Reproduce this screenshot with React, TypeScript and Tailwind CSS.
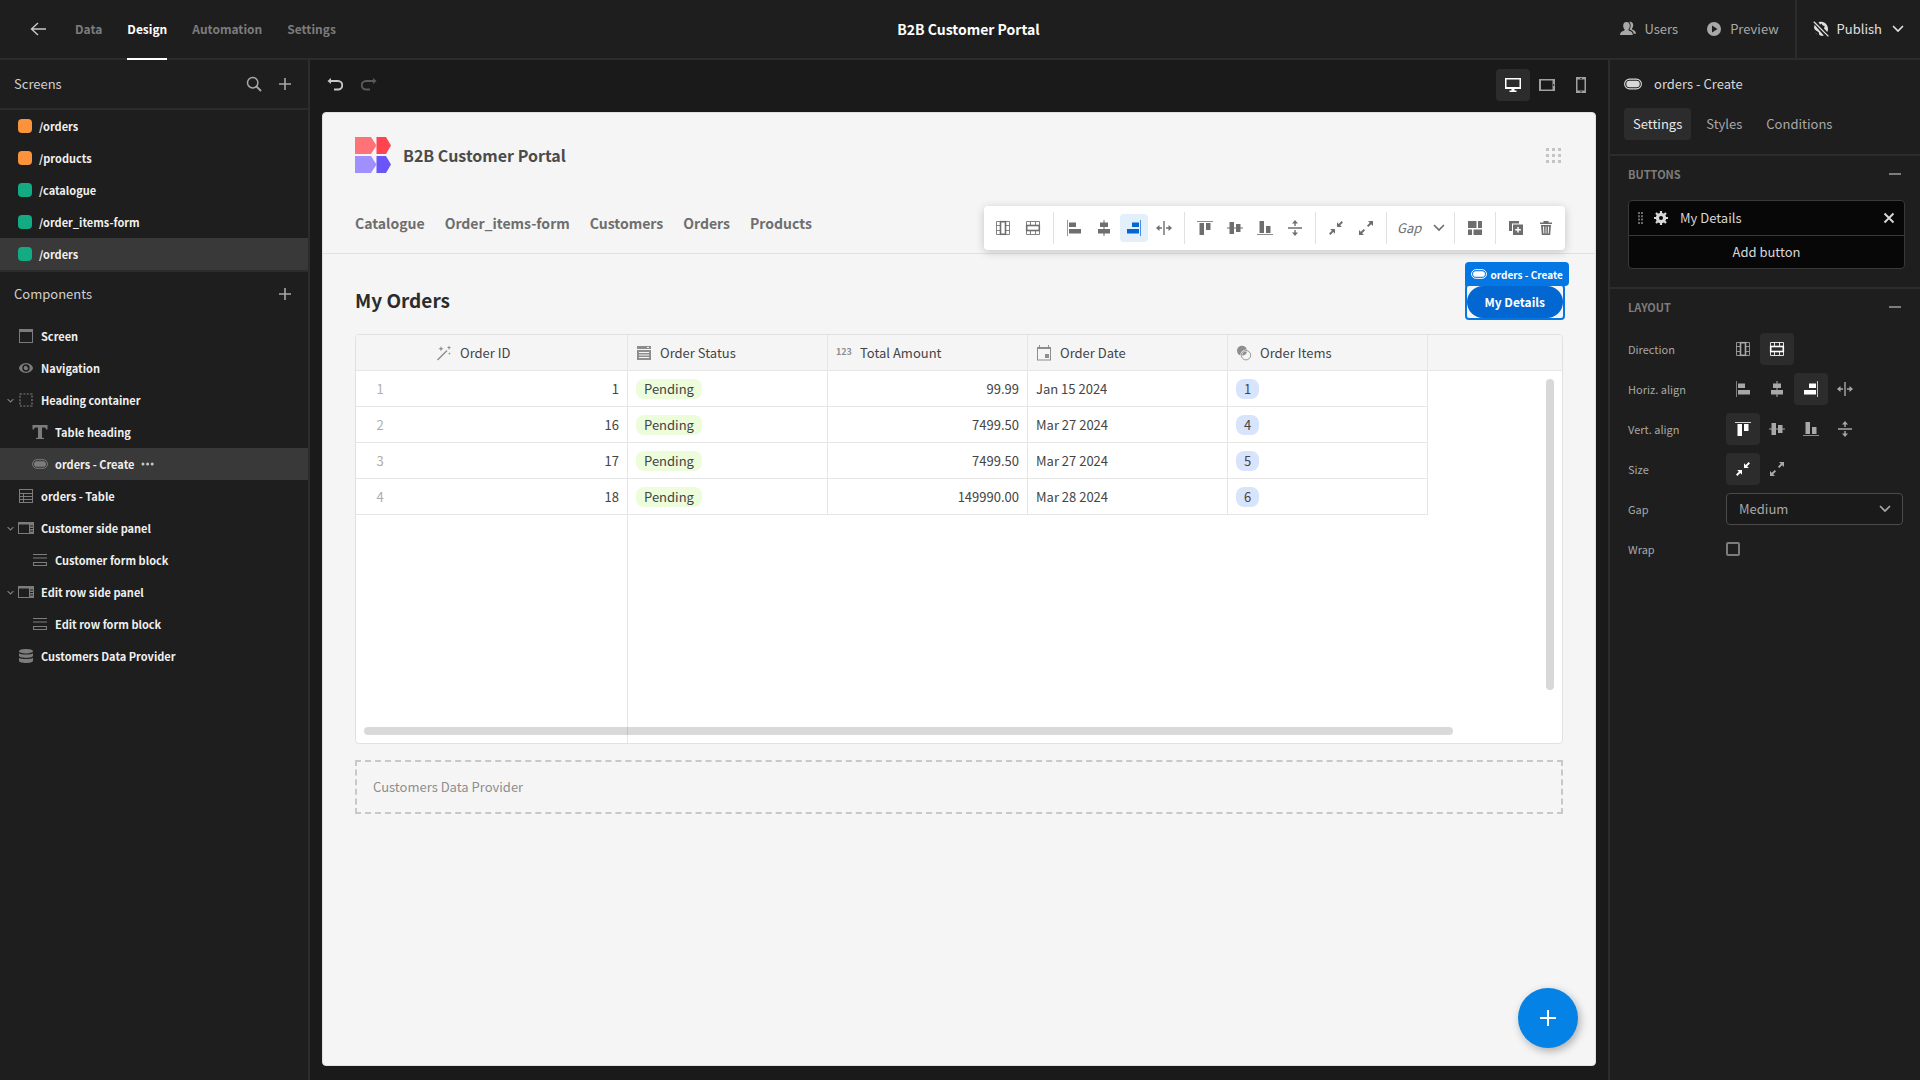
import type { ReactNode } from 'react';
import clsx from 'clsx';

interface IconProps {
  children: ReactNode;
  size?: string;
  box?: string;
}

function Icon({ children, size = 'size-4', box = '0 0 16 16' }: IconProps) {
  return (
    <svg viewBox={box} className={clsx('shrink-0', size)} fill="currentColor" aria-hidden="true">
      {children}
    </svg>
  );
}

const columnIcon = (
  <Icon>
    <g fill="none" stroke="currentColor">
      <path opacity=".85" d="M1.500 1.500h13v13h-13zM1.500 5.500h4M1.500 10.500h4M10.500 5.500h4M10.500 10.500h4" />
      <rect x="5.500" y="1.700" width="5" height="12.600" strokeWidth="1.600" />
    </g>
  </Icon>
);

const rowIcon = (
  <Icon>
    <g fill="none" stroke="currentColor">
      <path opacity=".85" d="M1.500 1.500h13v13h-13zM5.500 1.500v4M10.500 1.500v4M5.500 10.500v4M10.500 10.500v4" />
      <rect x="1.700" y="5.500" width="12.600" height="5" strokeWidth="1.600" />
    </g>
  </Icon>
);

const alignLeft = <Icon><path opacity=".7" d="M1 0h1v16H1z" /><path d="M3 2.500h7v4.500H3zM3 9h12v4.500H3z" /></Icon>;
const alignCenter = <Icon><path d="M7.500 0h1v16h-1zM4 2.500h8v4.500H4zM2 9h12v4.500H2z" /></Icon>;
const alignRight = <Icon><path opacity=".7" d="M14 0h1v16h-1z" /><path d="M6 2.500h7v4.500H6zM1 9h12v4.500H1z" /></Icon>;
const spreadH = (
  <Icon>
    <path d="M7.300 1h1.400v14H7.300zM0 8l3.500-3v2.300H6v1.400H3.500V11zM16 8l-3.500-3v2.300H10v1.400h2.500V11z" />
  </Icon>
);
const alignTop = <Icon><path opacity=".8" d="M0 1h16v1H0z" /><path d="M2.500 3h4.500v12H2.500zM9 3h4.500v7H9z" /></Icon>;
const alignMiddle = <Icon><path d="M0 7.500h16v1H0zM2.500 2h4.500v12H2.500zM9 4h4.500v8H9z" /></Icon>;
const alignBottom = <Icon><path opacity=".8" d="M0 14h16v1H0z" /><path d="M2.500 1h4.500v12H2.500zM9 6h4.500v7H9z" /></Icon>;
const spreadV = (
  <Icon>
    <path d="M1 7.300h14v1.400H1zM8 0l3 3.500H8.700V6H7.300V3.500H5zM8 16l3-3.500H8.700V10H7.300v2.500H5z" />
  </Icon>
);
const shrinkIcon = (
  <Icon>
    <path d="M9 7V2.200l1.700 1.700L13.600 1 15 2.400l-2.900 2.900L13.800 7zM7 9v4.800l-1.700-1.700L2.400 15 1 13.600l2.900-2.900L2.200 9z" />
  </Icon>
);
const growIcon = (
  <Icon>
    <path d="M15 1v5l-1.800-1.800-2.900 2.900-1.400-1.400 2.900-2.900L10 1zM1 15v-5l1.800 1.800 2.900-2.900 1.400 1.400-2.900 2.900L6 15z" />
  </Icon>
);

const chevronDown = (
  <Icon size="size-3" box="0 0 12 12">
    <path d="M1.500 3.500 6 8l4.500-4.500" fill="none" stroke="currentColor" strokeWidth="1.700" strokeLinecap="round" />
  </Icon>
);
const plusIcon = (
  <Icon>
    <path d="M7.200 2h1.600v5.200H14v1.600H8.800V14H7.200V8.800H2V7.200h5.200z" />
  </Icon>
);
const minusIcon = <Icon size="size-3" box="0 0 12 12"><path d="M0 5h12v2H0z" /></Icon>;

function PillIcon({ size = 'h-3 w-4' }: { size?: string }) {
  return (
    <svg viewBox="0 0 18 12" className={clsx('shrink-0', size)} aria-hidden="true">
      <rect x=".600" y="1.100" width="16.800" height="9.800" rx="4.900" fill="none" stroke="currentColor" strokeWidth="1.100" />
      <rect x="2.300" y="2.800" width="13.400" height="6.400" rx="3.200" fill="currentColor" />
    </svg>
  );
}

const screenIcon = <Icon><path fillRule="evenodd" d="M1 1h14v14H1zm1 3v10h12V4z" /></Icon>;
const eyeIcon = (
  <Icon>
    <path
      fillRule="evenodd"
      d="M8 3C4.500 3 1 6 1 8s3.500 5 7 5 7-3 7-5-3.500-5-7-5zm0 1.300a3.700 3.700 0 1 1 0 7.400 3.700 3.700 0 0 1 0-7.400z"
    />
    <path d="M8 5.800c.6 0 .9.100 1.200.3-.9.300-.6 1.700.9 1.500A2.200 2.200 0 1 1 8 5.800z" />
  </Icon>
);
const containerIcon = (
  <Icon>
    <rect x="2" y="2" width="12" height="12" fill="none" stroke="currentColor" strokeWidth="1.200" strokeDasharray="2 1.400" />
  </Icon>
);
const textIcon = <Icon><path d="M.5 1h15v4.500h-1.300c-.3-1.600-1-2-2.700-2H10v9c0 1.200.5 1.500 2 1.500v1H4v-1c1.500 0 2-.3 2-1.500v-9H4.500c-1.700 0-2.400.4-2.700 2H.5z" /></Icon>;
const tableIcon = (
  <Icon>
    <path fillRule="evenodd" d="M1 1h14v14H1zm1 1v3h12V2zm0 4v2h3V6zm4 0v2h8V6zM2 9v2h3V9zm4 0v2h8V9zm-4 3v2h3v-2zm4 0v2h8v-2z" />
  </Icon>
);
const sidePanelIcon = (
  <Icon>
    <path fillRule="evenodd" d="M0 2h16v12H0zm1 2.500V13h10V4.500zm11 1v1h3v-1zm0 2.500v1h3V8zm0 2.500v1h3v-1z" />
  </Icon>
);
const formIcon = <Icon><path fillRule="evenodd" d="M1 2h14v1H1zM1 5.500h14v1H1zM1 10h14v4H1zm1 1v2h12v-2z" /></Icon>;
const dataIcon = (
  <Icon>
    <path d="M8 1c3.900 0 7 .9 7 2.200S11.900 5.400 8 5.400 1 4.500 1 3.200 4.100 1 8 1zM1 5.200C2.500 6.200 5 6.500 8 6.500s5.500-.3 7-1.300v2.600C15 9 11.900 9.900 8 9.900S1 9 1 7.800zM1 9.700c1.500 1 4 1.300 7 1.300s5.500-.3 7-1.300v3C15 14 11.900 15 8 15s-7-1-7-2.300z" />
  </Icon>
);

const screens = [
  { name: '/orders', tint: 'bg-[#fb923c]' },
  { name: '/products', tint: 'bg-[#fb923c]' },
  { name: '/catalogue', tint: 'bg-[#12ab84]' },
  { name: '/order_items-form', tint: 'bg-[#12ab84]' },
  { name: '/orders', tint: 'bg-[#12ab84]', selected: true },
];

const components = [
  { name: 'Screen', icon: screenIcon },
  { name: 'Navigation', icon: eyeIcon },
  { name: 'Heading container', icon: containerIcon, open: true },
  { name: 'Table heading', icon: textIcon, nested: true },
  { name: 'orders - Create', icon: <PillIcon />, nested: true, selected: true },
  { name: 'orders - Table', icon: tableIcon },
  { name: 'Customer side panel', icon: sidePanelIcon, open: true },
  { name: 'Customer form block', icon: formIcon, nested: true },
  { name: 'Edit row side panel', icon: sidePanelIcon, open: true },
  { name: 'Edit row form block', icon: formIcon, nested: true },
  { name: 'Customers Data Provider', icon: dataIcon },
];

const orders = [
  { id: 1, status: 'Pending', total: '99.99', date: 'Jan 15 2024', items: 1 },
  { id: 16, status: 'Pending', total: '7499.50', date: 'Mar 27 2024', items: 4 },
  { id: 17, status: 'Pending', total: '7499.50', date: 'Mar 27 2024', items: 5 },
  { id: 18, status: 'Pending', total: '149990.00', date: 'Mar 28 2024', items: 6 },
];

function TopBar() {
  return (
    <header className="grid h-[60px] grid-cols-[1fr_auto_1fr] border-b-2 border-[#2c2c2c] pl-[17px]">
      <div className="flex items-center pl-[11px]">
        <button aria-label="Back" className="mr-[27px] text-[#c8c8c8]">
          <Icon size="size-5" box="0 0 20 20">
            <path d="M10 4 3.500 10 10 16M3.500 10H18" fill="none" stroke="currentColor" strokeWidth="1.400" />
          </Icon>
        </button>
        <nav className="flex gap-[25px] self-stretch text-xs font-bold text-[#7c7c7c]">
          {['Data', 'Design', 'Automation', 'Settings'].map((tab) => (
            <a
              key={tab}
              href="#"
              className={clsx('-mb-0.5 flex items-center border-b-2', tab === 'Design' ? 'border-white text-white' : 'border-transparent')}
            >
              {tab}
            </a>
          ))}
        </nav>
      </div>
      <h1 className="self-center text-sm font-bold text-white">B2B Customer Portal</h1>
      <div className="flex items-center justify-end text-[13px] text-[#a8a8a8]">
        <button className="mr-7 flex items-center gap-2">
          <Icon>
            <path d="M6.500 1C8.700 1 9.800 2.600 9.800 4.700c0 1.500-.5 2.700-1.200 3.500-.3.400-.3 1.100.2 1.300 2.400 1 4 1.700 4 4.300V14H0v-.2c0-2.600 1.800-3.300 4.200-4.300.5-.2.500-.9.200-1.300-.7-.8-1.200-2-1.200-3.500C3.200 2.600 4.300 1 6.500 1z" />
            <path d="M9.300.8c2.400-.5 3.900 1 3.900 3.400 0 1.400-.5 2.400-1.100 3.100-.3.400-.2 1 .2 1.200 2.200.9 3.700 1.800 3.700 4.200h-2.300c-.3-2.400-2-3.300-4.200-4.200 1.500-2.200 1.700-5.500-.2-7.700z" />
          </Icon>
          Users
        </button>
        <button className="mr-4 flex items-center gap-2">
          <Icon>
            <path fillRule="evenodd" d="M8 1a7 7 0 1 0 0 14A7 7 0 0 0 8 1zM6 4.500 11.500 8 6 11.500z" />
          </Icon>
          Preview
        </button>
        <button className="flex items-center gap-2 self-stretch border-l-2 border-[#2c2c2c] px-4 text-[#e0e0e0]">
          <Icon>
            <path d="M5.500 1A7.300 7.300 0 0 1 15 8c0 1.200-.2 2-.7 2.900l-3.300-3.300.7-2.500-2-.5L8.500 2.500 7 3.800zM1.500 3.800l9.300 10.700-1.800.5-2.700-1-.6-2.700L2 8.700 1 7zM2 11l2.500 2.800A7 7 0 0 1 2 11z" />
            <path d="m.8.800 14.600 14.600" fill="none" stroke="currentColor" strokeWidth="1.300" />
          </Icon>
          <span className="mr-0.5">Publish</span>
          {chevronDown}
        </button>
      </div>
    </header>
  );
}

function LeftPanel() {
  return (
    <aside className="w-[310px] shrink-0 border-r-2 border-[#2c2c2c] text-[11px] font-bold text-[#f0f0f0]">
      <div className="flex h-[50px] items-center border-b-2 border-[#2c2c2c] px-[14px] text-[#a8a8a8]">
        <h2 className="grow text-[13px] font-normal text-[#d0d0d0]">Screens</h2>
        <button aria-label="Search" className="mr-[15px]">
          <Icon>
            <circle cx="6.700" cy="6.700" r="5.200" fill="none" stroke="currentColor" strokeWidth="1.500" />
            <path d="m10.500 10.500 4.500 4.500" stroke="currentColor" strokeWidth="1.800" />
          </Icon>
        </button>
        <button aria-label="Add screen" className="mr-px">{plusIcon}</button>
      </div>
      <ul className="border-b-2 border-[#2c2c2c]">
        {screens.map((screen, i) => (
          <li key={i}>
            <a href="#" className={clsx('flex h-8 items-center gap-[7px] px-[18px]', screen.selected && 'bg-[#393939]')}>
              <span className={clsx('size-[14px] rounded', screen.tint)} />
              {screen.name}
            </a>
          </li>
        ))}
      </ul>
      <div className="flex h-11 items-center px-[14px] text-[#a8a8a8]">
        <h2 className="grow text-[13px] font-normal text-[#d0d0d0]">Components</h2>
        <button aria-label="Add component" className="mr-px">{plusIcon}</button>
      </div>
      <ul className="pt-1">
        {components.map((item) => (
          <li key={item.name} className={clsx('flex h-8 items-center', item.nested ? 'pl-8' : 'pl-[7px]', item.selected && 'bg-[#393939]')}>
            {!item.nested && (
              <span className="w-[11px] text-[#7c7c7c]">
                {item.open && (
                  <Icon size="size-[7px]" box="0 0 12 12">
                    <path d="M1 3.500 6 8.500l5-5" fill="none" stroke="currentColor" strokeWidth="2" />
                  </Icon>
                )}
              </span>
            )}
            <span className="mr-[7px] text-[#7c7c7c]">{item.icon}</span>
            <a href="#">{item.name}</a>
            {item.selected && (
              <button aria-label="More" className="ml-1.5 text-[#c8c8c8]">
                <Icon>
                  <circle cx="3" cy="8" r="1.500" />
                  <circle cx="7.600" cy="8" r="1.500" />
                  <circle cx="12.200" cy="8" r="1.500" />
                </Icon>
              </button>
            )}
          </li>
        ))}
      </ul>
    </aside>
  );
}

function ToolButton({ label, active, children }: { label: string; active?: boolean; children: ReactNode }) {
  return (
    <button
      aria-label={label}
      className={clsx('flex size-7 items-center justify-center rounded-sm', active && 'bg-[#e3effb] text-[#0367d1]')}
    >
      {children}
    </button>
  );
}

function ToolDivider() {
  return <span className="mx-1 h-8 w-px bg-[#e1e1e1]" />;
}

function FloatingToolbar() {
  return (
    <div className="absolute top-[93px] right-[30px] z-10 flex items-center gap-0.5 rounded bg-white px-[5px] py-1.5 text-[#6e6e6e] shadow-[0_2px_10px_rgba(0,0,0,0.2)]">
      <ToolButton label="Column">{columnIcon}</ToolButton>
      <ToolButton label="Row">{rowIcon}</ToolButton>
      <ToolDivider />
      <ToolButton label="Align left">{alignLeft}</ToolButton>
      <ToolButton label="Align center">{alignCenter}</ToolButton>
      <ToolButton label="Align right" active>{alignRight}</ToolButton>
      <ToolButton label="Space horizontally">{spreadH}</ToolButton>
      <ToolDivider />
      <ToolButton label="Align top">{alignTop}</ToolButton>
      <ToolButton label="Align middle">{alignMiddle}</ToolButton>
      <ToolButton label="Align bottom">{alignBottom}</ToolButton>
      <ToolButton label="Space vertically">{spreadV}</ToolButton>
      <ToolDivider />
      <ToolButton label="Shrink">{shrinkIcon}</ToolButton>
      <ToolButton label="Grow">{growIcon}</ToolButton>
      <ToolDivider />
      <button className="flex w-[55px] items-center justify-between pr-[3px] pl-1 text-[13px] italic">
        Gap
        {chevronDown}
      </button>
      <ToolDivider />
      <ToolButton label="Blocks">
        <Icon><path d="M1 1h8.500v7H1zM11 1h4v7h-4zM1 9.500h4V15H1zM6.500 9.500H15V15H6.500z" /></Icon>
      </ToolButton>
      <ToolDivider />
      <ToolButton label="Duplicate">
        <Icon>
          <path d="M1 1h10v2.500H4V11H1z" />
          <path fillRule="evenodd" d="M5 4.500h10V15H5zm4.300 2.500v2H7.200v1.500h2.100v2.100h1.500v-2.100h2.100V9h-2.100V7z" />
        </Icon>
      </ToolButton>
      <ToolButton label="Delete">
        <Icon>
          <path fillRule="evenodd" d="M5.500 1h5v1.500H14V4H2V2.500h3.500zM3 5h10l-.8 10H3.800zm2 1.500.4 7h.9l-.3-7zm2.600 0v7h.8v-7zm2.500 0-.3 7h.9l.4-7z" />
        </Icon>
      </ToolButton>
    </div>
  );
}

const headings = [
  {
    name: 'Order Status',
    icon: <Icon><path fillRule="evenodd" d="M1 1h14v3H1zm10 1v1h2V2zM1 5h14v10H1zm2 2v1h10V7zm0 2.500v1h10v-1zM3 12v1h10v-1z" /></Icon>,
  },
  { name: 'Total Amount', icon: <span className="block w-4 pb-0.5 text-[9px] leading-3 font-bold">123</span> },
  {
    name: 'Order Date',
    icon: (
      <Icon>
        <path fillRule="evenodd" d="M1 2h2V0h1v2h8V0h1v2h2v13.500H1zm1 2v10.500h12V4z" />
        <path d="M9 9h4v4H9z" />
      </Icon>
    ),
  },
  {
    name: 'Order Items',
    icon: (
      <Icon>
        <circle cx="6" cy="5.800" r="5" />
        <circle cx="10" cy="10.200" r="4.700" fill="none" stroke="#f5f5f5" strokeWidth="2" />
        <circle cx="10" cy="10.200" r="4.700" fill="none" stroke="currentColor" strokeWidth=".900" />
      </Icon>
    ),
  },
];

function OrdersTable() {
  const th = 'border-r border-b border-[#e6e6e6] px-2 font-normal';
  const td = 'border-r border-b border-[#e6e6e6] px-2';
  return (
    <div className="relative mt-4 flex h-[410px] flex-col overflow-hidden rounded border border-[#e1e1e1] bg-white">
      <table className="w-full table-fixed border-separate border-spacing-0 text-[13px] text-[#444444]">
        <colgroup>
          <col className="w-12" />
          <col className="w-56" />
          <col className="w-[200px]" />
          <col className="w-[200px]" />
          <col className="w-[200px]" />
          <col className="w-[200px]" />
          <col />
        </colgroup>
        <thead>
          <tr className="h-9 bg-[#f5f5f5] text-left">
            <th className="border-b border-[#e6e6e6]" aria-label="Row" />
            <th className={clsx(th, 'pl-8')}>
              <span className="flex items-center gap-2">
                <span className="text-[#8e8e8e]">
                  <Icon>
                    <path d="m1 14.500 9.500-9.500 1 1L2 15.500zM5 1l.7 2 2 .8-2 .7L5 6.500l-.7-2-2-.7 2-.8zM13 .5l.6 1.600 1.600.6-1.600.6-.6 1.600-.6-1.600-1.600-.6 1.600-.6zM13.500 7l.4 1.200 1.200.4-1.200.4-.4 1.200-.4-1.200-1.200-.4 1.200-.4z" />
                  </Icon>
                </span>
                Order ID
              </span>
            </th>
            {headings.map((heading) => (
              <th key={heading.name} className={th}>
                <span className="flex items-center gap-2">
                  <span className="text-[#8e8e8e]">{heading.icon}</span>
                  {heading.name}
                </span>
              </th>
            ))}
            <th className="border-b border-[#e6e6e6]" aria-label="Spacer" />
          </tr>
        </thead>
        <tbody>
          {orders.map((order, i) => (
            <tr key={order.id} className="h-9">
              <td className="border-b border-[#e6e6e6] text-center text-[#adadad]">{i + 1}</td>
              <td className={clsx(td, 'text-right')}>{order.id}</td>
              <td className={td}>
                <span className="inline-block h-5 rounded-lg bg-[#edfcdb] px-2 leading-5">{order.status}</span>
              </td>
              <td className={clsx(td, 'text-right')}>{order.total}</td>
              <td className={td}>{order.date}</td>
              <td className={td}>
                <span className="inline-block h-5 rounded-lg bg-[#d8e4fc] px-2 leading-5">{order.items}</span>
              </td>
              <td />
            </tr>
          ))}
        </tbody>
      </table>
      <div className="w-[272px] grow border-r border-[#e6e6e6]" />
      <span className="absolute top-11 right-2 bottom-[53px] w-2 rounded bg-[#d8d8d8]" />
      <span className="absolute right-[109px] bottom-2 left-2 h-2 rounded bg-black/15" />
    </div>
  );
}

function Canvas() {
  return (
    <div className="relative flex grow flex-col rounded border border-[#e1e1e1] bg-[#f5f5f5] text-[#6e6e6e]">
      <div className="border-b border-[#e1e1e1] px-8 pt-6 pb-3">
        <div className="flex items-center gap-3">
          <svg viewBox="0 0 36 36" className="size-9" aria-hidden="true">
            <path fill="#ff7277" d="M0 0h16l5.500 8.500L16 17H0z" />
            <path fill="#ff4450" d="M21.500 0H31l5 8.500-5 8.500h-9.500z" />
            <path fill="#9f8fff" d="M0 19h16l5.500 8.500L16 36H0z" />
            <path fill="#6a55f8" d="M21.500 19H31l5 8.500-5 8.500h-9.500z" />
          </svg>
          <h2 className="grow text-base font-bold text-[#4b4b4b]">B2B Customer Portal</h2>
          <button aria-label="Apps" className="mr-0.5 text-[#c4c4c4]">
            <Icon size="size-[15px]" box="0 0 15 15">
              <path d="M0 0h3v3H0zM6 0h3v3H6zM12 0h3v3h-3zM0 6h3v3H0zM6 6h3v3H6zM12 6h3v3h-3zM0 12h3v3H0zM6 12h3v3H6zM12 12h3v3h-3z" />
            </Icon>
          </button>
        </div>
        <nav className="mt-8 flex h-9 items-center gap-5 text-sm font-bold">
          {['Catalogue', 'Order_items-form', 'Customers', 'Orders', 'Products'].map((link) => (
            <a key={link} href="#">{link}</a>
          ))}
        </nav>
      </div>
      <FloatingToolbar />
      <main className="p-8">
        <div className="flex h-8 items-start justify-between">
          <h3 className="text-[19px] leading-7 font-bold text-[#2c2c2c]">My Orders</h3>
          <div className="relative">
            <button className="block h-8 rounded-full bg-[#0367d1] px-[18px] text-xs font-bold text-white">My Details</button>
            <span className="pointer-events-none absolute -inset-0.5 rounded border-2 border-[#0477e4]" />
            <span className="absolute bottom-full -left-0.5 flex h-6 items-center gap-1 rounded rounded-bl-none bg-[#0477e4] px-1.5 text-[10px] font-bold whitespace-nowrap text-white">
              <PillIcon />
              orders - Create
            </span>
          </div>
        </div>
        <OrdersTable />
        <div className="mt-4 flex h-[54px] items-center border-2 border-dashed border-[#c8c8c8] px-4 text-[13px] text-[#8e8e8e]">
          Customers Data Provider
        </div>
      </main>
      <button
        aria-label="Add"
        className="absolute right-[17px] bottom-[17px] flex size-[60px] items-center justify-center rounded-full bg-[#0482e6] text-white shadow-[2px_3px_8px_rgba(0,0,0,0.3)]"
      >
        <Icon><path d="M7 0h2v7h7v2H9v7H7V9H0V7h7z" /></Icon>
      </button>
    </div>
  );
}

function Workspace() {
  const device = 'flex h-8 w-[34px] items-center justify-center rounded';
  return (
    <section className="flex min-w-0 grow flex-col bg-[#1a1a1a] px-3 pb-[14px]">
      <div className="mb-0.5 flex h-[50px] items-center text-[#c8c8c8]">
        <button aria-label="Undo" className="mr-[18px] ml-[5px]">
          <Icon>
            <path d="M4 1v6L.500 4z" />
            <path d="M3 4h8a4 4 0 0 1 0 8.500H7" fill="none" stroke="currentColor" strokeWidth="1.900" />
          </Icon>
        </button>
        <button aria-label="Redo" className="text-[#5a5a5a]">
          <Icon>
            <path d="M12 1v6l3.500-3z" />
            <path d="M13 4H5a4 4 0 0 0 0 8.500h4" fill="none" stroke="currentColor" strokeWidth="1.900" />
          </Icon>
        </button>
        <button aria-label="Desktop" className={clsx(device, 'ml-auto bg-[#2c2c2c] text-white')}>
          <Icon><path fillRule="evenodd" d="M0 1h16v11H9.500v1.500h2V15h-7v-1.500h2V12H0zm1.500 1.500V10h13V2.500z" /></Icon>
        </button>
        <button aria-label="Tablet" className={clsx(device, 'text-[#a0a0a0]')}>
          <Icon><path fillRule="evenodd" d="M0 2h16v12H0zm2 1.500v9h11.500v-9zm12 3.700v1.600h1.200V7.200z" /></Icon>
        </button>
        <button aria-label="Mobile" className={clsx(device, '-mr-0.5 text-[#a0a0a0]')}>
          <Icon><path fillRule="evenodd" d="M3 0h10v16H3zm1.500 2.500v11h7v-11zM7 1v.700h2V1zm.3 13.300v1h1.400v-1z" /></Icon>
        </button>
      </div>
      <Canvas />
    </section>
  );
}

function OptionButton({ label, active, children }: { label: string; active?: boolean; children: ReactNode }) {
  return (
    <button
      aria-label={label}
      className={clsx('flex h-8 w-[34px] items-center justify-center rounded', active && 'bg-[#2c2c2c] text-white')}
    >
      {children}
    </button>
  );
}

function SettingRow({ label, htmlFor, children }: { label: string; htmlFor?: string; children: ReactNode }) {
  return (
    <div className="flex h-8 items-center">
      <label htmlFor={htmlFor} className="w-[98px] shrink-0 text-[11px]">{label}</label>
      {children}
    </div>
  );
}

function RightPanel() {
  return (
    <aside className="w-[312px] shrink-0 border-l-2 border-[#2c2c2c] text-[#a8a8a8]">
      <div className="border-b-2 border-[#2c2c2c] px-[14px] pt-2 pb-[14px] text-[13px]">
        <div className="flex h-8 items-center gap-3 text-[#d8d8d8]">
          <PillIcon size="h-3 w-[18px]" />
          orders - Create
        </div>
        <div className="mt-2 flex gap-1.5">
          {['Settings', 'Styles', 'Conditions'].map((tab) => (
            <button
              key={tab}
              className={clsx('h-8 rounded px-[9px]', tab === 'Settings' && 'bg-[#2c2c2c] text-[#e8e8e8]')}
            >
              {tab}
            </button>
          ))}
        </div>
      </div>

      <div className="border-b-2 border-[#2c2c2c] pt-1.5 pr-[15px] pb-[18px] pl-[18px]">
        <button className="flex h-6 w-full items-center justify-between pr-1 text-[11px] font-bold text-[#7c7c7c]">
          BUTTONS
          {minusIcon}
        </button>
        <div className="mt-[14px] rounded border border-[#393939] bg-[#070707] text-[13px] text-[#d8d8d8]">
          <div className="flex h-[35px] items-center border-b border-[#393939] px-[9px]">
            <Icon size="h-3 w-[5px]" box="0 0 5 12">
              <path fill="#6a6a6a" d="M0 0h2v2H0zM3 0h2v2H3zM0 3.300h2v2H0zM3 3.300h2v2H3zM0 6.600h2v2H0zM3 6.600h2v2H3zM0 10h2v2H0zM3 10h2v2H3z" />
            </Icon>
            <button aria-label="Edit button" className="mr-[11px] ml-[10px]">
              <Icon>
                <circle cx="8" cy="8" r="3.600" fill="none" stroke="currentColor" strokeWidth="3.200" />
                <path
                  d="M8 1v3M8 12v3M1 8h3M12 8h3M3 3l2 2M11 11l2 2M3 13l2-2M11 5l2-2"
                  stroke="currentColor"
                  strokeWidth="2.200"
                />
              </Icon>
            </button>
            <span className="grow">My Details</span>
            <button aria-label="Remove button">
              <Icon size="size-3" box="0 0 12 12">
                <path d="m1.500 1.500 9 9M10.500 1.500l-9 9" stroke="currentColor" strokeWidth="1.900" />
              </Icon>
            </button>
          </div>
          <button className="block h-8 w-full">Add button</button>
        </div>
      </div>

      <div className="pt-1.5 pr-[17px] pl-[18px]">
        <button className="flex h-6 w-full items-center justify-between pr-0.5 text-[11px] font-bold text-[#7c7c7c]">
          LAYOUT
          {minusIcon}
        </button>
        <div className="mt-[14px] flex flex-col gap-2">
          <SettingRow label="Direction">
            <OptionButton label="Column">{columnIcon}</OptionButton>
            <OptionButton label="Row" active>{rowIcon}</OptionButton>
          </SettingRow>
          <SettingRow label="Horiz. align">
            <OptionButton label="Left">{alignLeft}</OptionButton>
            <OptionButton label="Center">{alignCenter}</OptionButton>
            <OptionButton label="Right" active>{alignRight}</OptionButton>
            <OptionButton label="Space between">{spreadH}</OptionButton>
          </SettingRow>
          <SettingRow label="Vert. align">
            <OptionButton label="Top" active>{alignTop}</OptionButton>
            <OptionButton label="Middle">{alignMiddle}</OptionButton>
            <OptionButton label="Bottom">{alignBottom}</OptionButton>
            <OptionButton label="Space between">{spreadV}</OptionButton>
          </SettingRow>
          <SettingRow label="Size">
            <OptionButton label="Shrink" active>{shrinkIcon}</OptionButton>
            <OptionButton label="Grow">{growIcon}</OptionButton>
          </SettingRow>
          <SettingRow label="Gap" htmlFor="gap">
            <div className="relative grow">
              <select
                id="gap"
                defaultValue="Medium"
                className="h-8 w-full appearance-none rounded border border-[#4b4b4b] bg-[#1a1a1a] px-3 text-[13px]"
              >
                <option>None</option>
                <option>Small</option>
                <option>Medium</option>
                <option>Large</option>
              </select>
              <span className="pointer-events-none absolute top-[10px] right-3">{chevronDown}</span>
            </div>
          </SettingRow>
          <SettingRow label="Wrap" htmlFor="wrap">
            <input id="wrap" type="checkbox" className="size-[14px] appearance-none rounded-xs border-2 border-[#7c7c7c]" />
          </SettingRow>
        </div>
      </div>
    </aside>
  );
}

export default function App() {
  return (
    <div className="flex min-h-screen flex-col bg-[#1e1e1e] font-['Noto_Sans_CJK_SC','Open_Sans',sans-serif]">
      <TopBar />
      <div className="flex grow">
        <LeftPanel />
        <Workspace />
        <RightPanel />
      </div>
    </div>
  );
}
